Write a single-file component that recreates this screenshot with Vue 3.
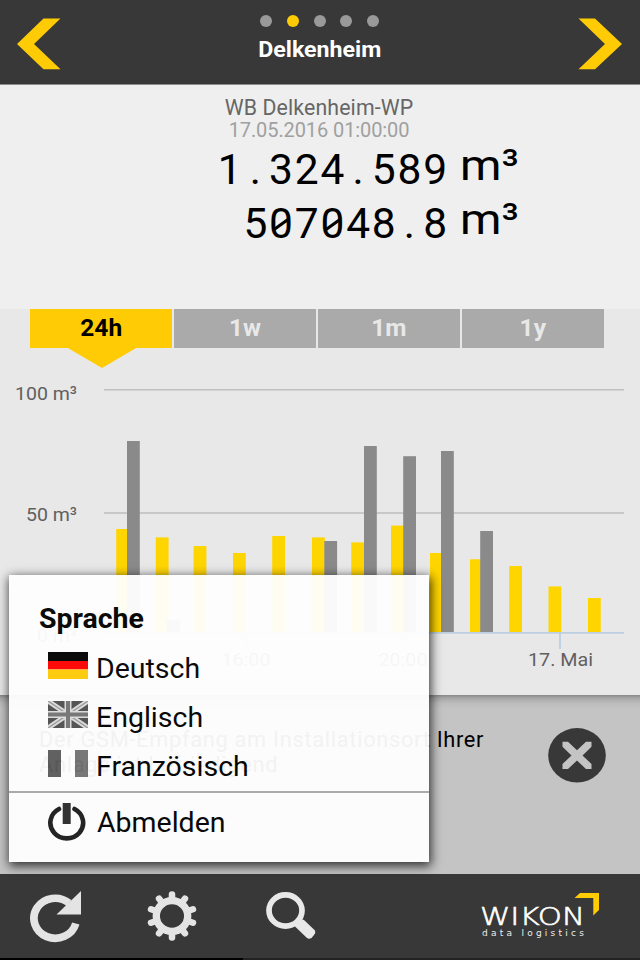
<template>
  <div class="app">
    <header class="topbar">
      <svg class="arrow" width="44" height="52" viewBox="0 0 44 52">
        <path d="M26.5 0.5H43.5L17 26L43.5 51.3H26.5L0 26Z" />
      </svg>
      <div class="station">
        <div class="dots">
          <span v-for="n in 5" :key="n" :class="['dot', { active: n === 2 }]"></span>
        </div>
        <h1>Delkenheim</h1>
      </div>
      <svg class="arrow" width="44" height="52" viewBox="0 0 44 52">
        <path d="M0.5 0.5H17L44 26L17 51.3H0.5L27 26Z" />
      </svg>
    </header>

    <section class="reading">
      <div class="meter">WB Delkenheim-WP</div>
      <div class="time">17.05.2016 01:00:00</div>
      <div v-for="value in values" :key="value" class="value">
        <div class="digits">
          <span v-for="(c, i) in value" :key="i" :class="['digit', { zero: c === '0' }]">{{ c }}</span>
        </div>
        <div class="unit">m³</div>
      </div>
    </section>

    <section class="history">
      <nav class="tabs">
        <div v-for="tab in tabs" :key="tab" :class="['tab', { active: tab === activeTab }]" @click="activeTab = tab">
          <span>{{ tab }}</span>
        </div>
      </nav>
      <svg class="chart" width="640" height="346" viewBox="0 348 640 346">
        <rect x="104" y="389" width="520" height="1.5" fill="#c0c0c0" />
        <rect x="104" y="512.2" width="520" height="1.6" fill="#c0c0c0" />
        <rect v-for="b in consumption" :key="b[0]" :x="b[0]" :y="b[1]" width="12.8" :height="632 - b[1]" fill="#ffd500" />
        <rect v-for="b in previous" :key="b[0]" :x="b[0]" :y="b[1]" width="12.8" :height="632 - b[1]" fill="#8a8a8a" />
        <path d="M104 632.9H624M246 632V649M403 632V649M560 632V649" stroke="#bccfe0" stroke-width="1.8" />
        <g class="labels">
          <text x="77" y="400" text-anchor="end" textLength="62" lengthAdjust="spacingAndGlyphs">100 m³</text>
          <text x="77" y="520.5" text-anchor="end" textLength="51" lengthAdjust="spacingAndGlyphs">50 m³</text>
          <text x="77" y="642" text-anchor="end" textLength="40" lengthAdjust="spacingAndGlyphs">0 m³</text>
          <text x="246" y="666" text-anchor="middle" textLength="49" lengthAdjust="spacingAndGlyphs">16:00</text>
          <text x="403" y="666" text-anchor="middle" textLength="49" lengthAdjust="spacingAndGlyphs">20:00</text>
          <text x="560.5" y="666" text-anchor="middle" textLength="65" lengthAdjust="spacingAndGlyphs">17. Mai</text>
        </g>
      </svg>
    </section>

    <section class="notice">
      <p>Der GSM-Empfang am Installationsort Ihrer Anlage ist befriedigend</p>
      <svg width="58" height="55" viewBox="0 0 58 55">
        <ellipse cx="29" cy="27.3" rx="28.8" ry="27.2" fill="#383838" />
        <path d="M14.5 13.7H20L29 22.3L38 13.7H43.5V18.8L34.5 27.5L43.5 36V41H38L29 32.5L20 41H14.5V36L23.5 27.5L14.5 18.8Z" fill="#c4c4c4" />
      </svg>
    </section>

    <footer class="toolbar">
      <svg class="refresh" width="52" height="52" viewBox="0 0 52 52">
        <path d="M45.8 32.5A21.3 20 0 1 1 39 12" fill="none" stroke="#e4e4e4" stroke-width="7.7" />
        <path d="M51 0V23.5H26.5Z" fill="#e4e4e4" />
      </svg>
      <svg class="gear" width="52" height="50" viewBox="-26 -25 52 50">
        <g transform="scale(1.02 1)">
          <circle r="15.4" fill="none" stroke="#e4e4e4" stroke-width="7.2" />
          <path v-for="n in 10" :key="n" :transform="`rotate(${n * 36})`" d="M0 -17V-21.6" stroke="#e4e4e4" stroke-width="6.4" stroke-linecap="round" />
        </g>
      </svg>
      <svg class="search" width="50" height="48" viewBox="0 0 50 48">
        <ellipse cx="19.5" cy="18.5" rx="16.5" ry="15.6" fill="none" stroke="#e8e8e8" stroke-width="5.7" />
        <path d="M38 28L49 38.5Q50 41 48 43L45.5 46Q43 47.5 41 46L29 34.5Q28 33.5 31 31L35 27Z" fill="#e8e8e8" />
      </svg>
      <svg class="logo" width="120" height="46" viewBox="480 892 120 46">
        <path d="M580 893H599V910L593.3 915.5V898H574.5Z" fill="#ffcb05" />
        <text class="brand" x="480" y="925" textLength="105" lengthAdjust="spacingAndGlyphs">WIKON</text>
        <text class="claim" x="482" y="936" textLength="102">data logistics</text>
      </svg>
    </footer>
    <div class="edge"><span></span></div>

    <aside class="menu">
      <h2>Sprache</h2>
      <div class="entry">
        <svg width="40" height="27" viewBox="0 0 40 27">
          <path d="M0 0H40V9H0Z" fill="#000" />
          <path d="M0 9H40V17.5H0Z" fill="#f00" />
          <path d="M0 17.5H40V27H0Z" fill="#ffcb05" />
        </svg>
        <span>Deutsch</span>
      </div>
      <div class="entry">
        <svg width="40" height="27" viewBox="0 0 40 27">
          <path d="M0 0H40V27H0Z" fill="#505050" />
          <path d="M0 0L40 27M40 0L0 27" stroke="#ddd" stroke-width="5" />
          <path d="M0 0L40 27M40 0L0 27" stroke="#999" stroke-width="1.3" />
          <path d="M20 0V27M0 13.5H40" stroke="#ddd" stroke-width="7" />
          <path d="M20 0V27M0 13.5H40" stroke="#747474" stroke-width="4" />
        </svg>
        <span>Englisch</span>
      </div>
      <div class="entry">
        <svg width="40" height="27" viewBox="0 0 40 27">
          <path d="M0 0H13V27H0Z" fill="#5c5c5c" />
          <path d="M27 0H40V27H27Z" fill="#747474" />
        </svg>
        <span>Französisch</span>
      </div>
      <div class="entry logout">
        <svg width="40" height="38" viewBox="0 0 40 38">
          <path d="M11 6A16.4 15.6 0 1 0 26.5 6" fill="none" stroke="#1c1c1c" stroke-width="4.6" stroke-linecap="round" />
          <path d="M18.7 0V21" stroke="#2b2b2b" stroke-width="8" />
        </svg>
        <span>Abmelden</span>
      </div>
    </aside>
  </div>
</template>

<script setup>
import { ref } from 'vue'

const values = ['1.324.589', '507048.8']
const tabs = ['24h', '1w', '1m', '1y']
const activeTab = ref('24h')

// [x, top] of every bar, all of them stand on the axis
const consumption = [
  [116.2, 529], [155.8, 537.4], [193.6, 546], [233, 553], [272.2, 536],
  [312, 537.4], [351.2, 542.4], [391, 525.6], [430, 553], [470, 559.3],
  [509.2, 566], [548.5, 586.4], [588, 598]
]
const previous = [
  [127, 441], [166.8, 620], [324.3, 541], [364, 446], [403.2, 456.2],
  [441, 451], [480.2, 531]
]
</script>

<style>
body {
  margin: 0;
  background: #000;
}
</style>

<style scoped>
.app {
  position: relative;
  width: 640px;
  height: 960px;
  overflow: hidden;
  font-family: Roboto, "Liberation Sans", sans-serif;
  color: #000;
}

.app svg {
  display: block;
  flex: none;
}

.topbar {
  display: flex;
  justify-content: space-between;
  box-sizing: border-box;
  height: 85px;
  padding: 18px 18px 0 17px;
  background: #383838;
  border-bottom: 1px solid #8c8c8c;
}

.arrow {
  fill: #ffcb05;
}

.station {
  display: flex;
  flex-direction: column;
  align-items: center;
  margin-top: -3px;
}

.dots {
  display: flex;
  gap: 14.8px;
}

.dot {
  width: 12px;
  height: 12px;
  border-radius: 50%;
  background: #999;
}

.dot.active {
  background: #ffcb05;
}

.station h1 {
  margin: 9px 0 0;
  color: #fff;
  font-size: 22.5px;
  line-height: 27px;
  font-weight: 700;
  transform: scaleX(1.03);
}

.reading {
  box-sizing: border-box;
  height: 224px;
  padding-top: 11px;
  background: #efefef;
}

.meter,
.time {
  padding-right: 2px;
  text-align: center;
  line-height: 23px;
}

.meter {
  font-size: 21.3px;
  letter-spacing: 0.12px;
  color: #666;
}

.time {
  font-size: 20px;
  letter-spacing: -0.1px;
  color: #a0a0a0;
}

.value {
  display: flex;
  height: 54px;
}

.digits {
  display: flex;
  justify-content: flex-end;
  width: 448px;
  padding-top: 1px;
  font-size: 42.5px;
  line-height: 54px;
}

.digit {
  position: relative;
  width: 25.7px;
  text-align: center;
}

.zero::after {
  content: "";
  position: absolute;
  left: 4px;
  top: 26px;
  width: 18px;
  height: 3px;
  background: #000;
  transform: rotate(-36deg);
}

.unit {
  margin-left: 12px;
  font-size: 43px;
  line-height: 46px;
  transform: scaleX(1.1);
  transform-origin: left;
}

.history {
  height: 386px;
  background: #e8e8e8;
}

.tabs {
  display: flex;
  gap: 1.5px;
  width: 574px;
  height: 39px;
  margin-left: 30px;
}

.tab {
  position: relative;
  flex: 1;
  background: #aaa;
  color: #e8e8e8;
  font-size: 24.5px;
  font-weight: 700;
  line-height: 38px;
  text-align: center;
}

.tab.active {
  background: #ffcb05;
  color: #000;
}

.tab.active::after {
  content: "";
  position: absolute;
  left: 37px;
  top: 38.5px;
  width: 70px;
  height: 20.5px;
  background: #ffcb05;
  clip-path: polygon(0 0, 100% 0, 50% 100%);
}

.labels {
  font-size: 19px;
  fill: #606060;
}

.notice {
  display: flex;
  justify-content: space-between;
  box-sizing: border-box;
  height: 179px;
  padding: 33px 34px 0 39px;
  background: linear-gradient(#888, #a6a6a6 3px, #bcbcbc 8px, #c4c4c4 14px);
}

.notice p {
  width: 470px;
  margin: -1px 0 0;
  font-size: 21.8px;
  line-height: 25px;
  letter-spacing: 0.7px;
}

.toolbar {
  position: relative;
  display: flex;
  box-sizing: border-box;
  height: 84px;
  padding-top: 17px;
  padding-left: 30px;
  background: #383838;
}

.gear {
  margin-left: 64px;
}

.search {
  margin-left: 68px;
  margin-top: 1px;
}

.logo {
  margin-left: 164px;
  margin-top: 1px;
}

.brand {
  font-family: "DejaVu Sans", sans-serif;
  font-weight: 200;
  font-size: 24px;
  fill: #fff;
  stroke: #fff;
  stroke-width: 0.6px;
}

.claim {
  font-family: "DejaVu Sans", sans-serif;
  font-size: 9px;
  fill: #eee;
}

.edge {
  height: 2px;
  background: #222;
}

.edge span {
  display: block;
  width: 243px;
  height: 2px;
  background: #000;
}

.menu {
  position: absolute;
  left: 9px;
  top: 575px;
  box-sizing: border-box;
  width: 419.5px;
  height: 287px;
  padding-top: 27px;
  background: #fff;
  box-shadow: 1px 3px 10px 1px rgba(0, 0, 0, 0.8);
  opacity: 0.95;
}

.menu h2,
.entry span {
  transform: scaleX(1.055);
  transform-origin: left;
}

.menu h2 {
  margin: 0 0 8px 30px;
  font-size: 27px;
  line-height: 34px;
  font-weight: 700;
}

.entry {
  display: flex;
  align-items: center;
  gap: 8px;
  height: 49px;
  padding-left: 39px;
  font-size: 27px;
}

.entry svg {
  margin-top: -6px;
}

.logout {
  height: 60px;
  border-top: 2px solid #aaa;
  gap: 9px;
}

.logout svg {
  margin-top: -3px;
}
</style>
